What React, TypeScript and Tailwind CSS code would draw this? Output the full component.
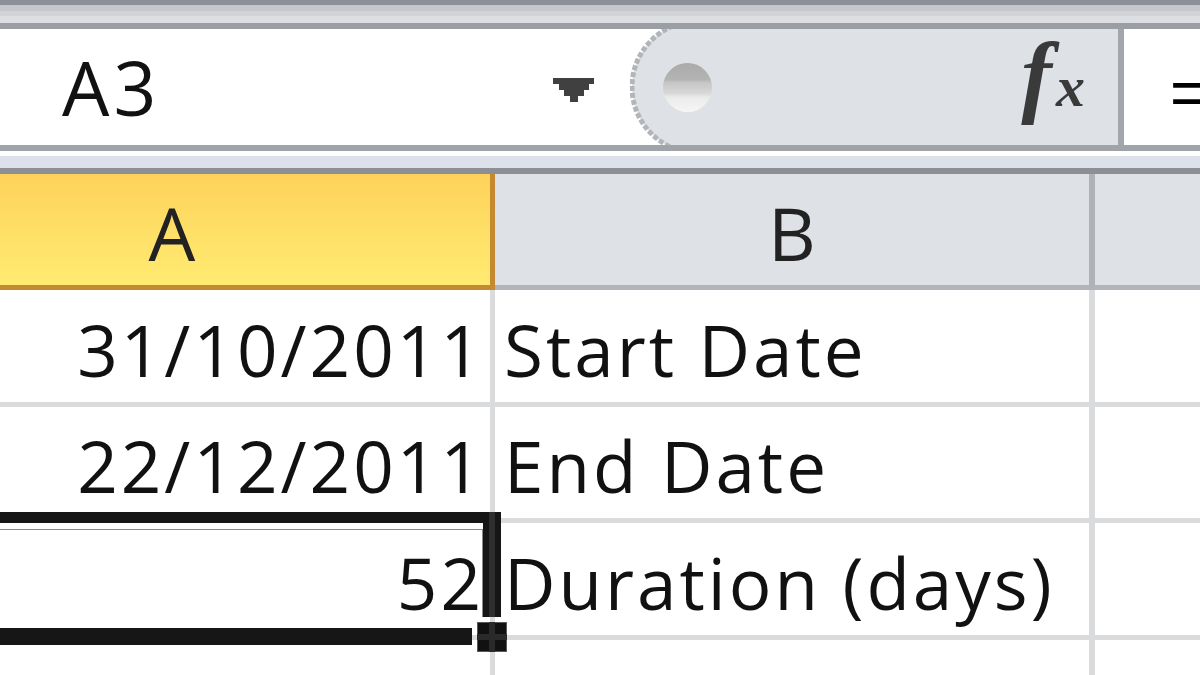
import React from 'react';

const SANS = "font-['Open_Sans','Noto_Sans',sans-serif]";

function DropArrow() {
  // stepped triangle of the name box dropdown
  return (
    <svg width="41" height="24" viewBox="0 0 41 24" className="block">
      <rect x="0" y="0" width="41" height="6" fill="#404040" />
      <rect x="6" y="6" width="30" height="6" fill="#404040" />
      <rect x="11" y="12" width="20" height="6" fill="#404040" />
      <rect x="17" y="18" width="8" height="6" fill="#404040" />
    </svg>
  );
}

function Splitter() {
  return (
    <svg width="488" height="116" viewBox="0 0 488 116" className="absolute inset-0">
      <defs>
        <linearGradient id="ball" x1="0" y1="0" x2="0" y2="1">
          <stop offset="0" stopColor="#aaaaaa" />
          <stop offset="0.34" stopColor="#b4b4b4" />
          <stop offset="0.4" stopColor="#c6c6c6" />
          <stop offset="0.62" stopColor="#d8d8d8" />
          <stop offset="0.7" stopColor="#ebebeb" />
          <stop offset="1" stopColor="#f6f6f6" />
        </linearGradient>
      </defs>
      <rect x="0" y="0" width="488" height="116" fill="#ffffff" />
      <circle cx="68" cy="58" r="66" fill="#dee1e6" stroke="#b3b5b9" strokeWidth="5" strokeDasharray="5 2" />
      <rect x="68" y="0" width="420" height="116" fill="#dee1e6" />
      <circle cx="57.5" cy="58.5" r="24.5" fill="url(#ball)" />
    </svg>
  );
}

function FormulaRow() {
  return (
    <div className="flex h-[116px]">
      <div className="flex w-[630px] shrink-0 items-end bg-white">
        <span className={`${SANS} pb-[20px] pl-[62px] text-[75px] leading-none tracking-[4px] text-[#111]`}>A3</span>
        <div className="ml-auto mr-[36px] self-center pt-[6px]">
          <DropArrow />
        </div>
      </div>
      <div className="relative flex w-[488px] shrink-0 items-end justify-end pb-[24px] pr-[33px]">
        <Splitter />
        <span className="relative flex items-baseline font-['Liberation_Serif',serif] font-bold italic leading-none text-[#3a3a3a]">
          <span className="text-[92px]">f</span>
          <span className="ml-[4px] text-[58px]">x</span>
        </span>
      </div>
      <div className="w-[6px] shrink-0 bg-[#a3a6aa]" />
      <div className="flex flex-1 items-center overflow-hidden bg-white pl-[46px] pt-[12px]">
        <span className="font-['Liberation_Sans',sans-serif] text-[64px] leading-none text-black">=</span>
      </div>
    </div>
  );
}

function HeaderRow() {
  return (
    <div className="flex h-[116px]">
      <div
        className={`${SANS} ml-[-146px] flex w-[641px] shrink-0 items-end justify-center border-b-[5px] border-r-[5px] border-[#c58a30] bg-linear-to-b from-[#fed25a] to-[#ffeb72] pb-[15px] text-[74px] leading-none text-[#222]`}
      >
        A
      </div>
      <div
        className={`${SANS} flex w-[600px] shrink-0 items-end justify-center border-b-[5px] border-r-[6px] border-b-[#b2b4b9] border-r-[#b0b2b7] bg-[#dee1e6] pb-[15px] text-[74px] leading-none text-[#222]`}
      >
        B
      </div>
      <div className="flex-1 border-b-[5px] border-[#b2b4b9] bg-[#dee1e6]" />
    </div>
  );
}

type RowProps = { a?: string; b?: string; h: string };

function Row({ a, b, h }: RowProps) {
  return (
    <div className={`flex ${h} border-b-[5px] border-[#dadbdd]`}>
      <div className={`${SANS} ml-[-146px] flex w-[641px] shrink-0 items-end justify-end border-r-[5px] border-[#dadbdd] pb-[17px] pr-[6px] text-[71px] leading-none tracking-[3px] text-[#111]`}>
        {a}
      </div>
      <div className={`${SANS} flex w-[600px] shrink-0 items-end border-r-[6px] border-[#dadbdd] pb-[17px] pl-[9px] text-[71px] leading-none tracking-[3px] whitespace-nowrap text-[#111]`}>
        {b}
      </div>
      <div className="flex-1" />
    </div>
  );
}

function Selection() {
  // active cell border of A3 with the fill handle
  return (
    <>
      <div className="absolute left-0 top-[512px] h-[11px] w-[501px] bg-[#161616]" />
      <div className="absolute left-[483px] top-[512px] h-[105px] w-[18px] bg-[#161616]" />
      <div className="absolute left-[489px] top-[512px] h-[105px] w-[6px] bg-[#2e2e2e]" />
      <div className="absolute left-0 top-[529px] h-px w-[482px] bg-[#8a8a8a]" />
      <div className="absolute left-[482px] top-[529px] h-[88px] w-px bg-[#8a8a8a]" />
      <div className="absolute left-0 top-[628px] h-[17px] w-[472px] bg-[#161616]" />
      <div className="absolute left-[477px] top-[622px] h-[30px] w-[30px] border border-[#5a5a5a] bg-[#111]" />
      <div className="absolute left-[489px] top-[622px] h-[30px] w-[6px] bg-[#2a2a2a]" />
      <div className="absolute left-[477px] top-[634px] h-[6px] w-[30px] bg-[#2a2a2a]" />
    </>
  );
}

export default function App() {
  return (
    <div className="relative h-[675px] w-[1200px] overflow-hidden bg-white">
      <div className="h-[5px] bg-[#8c9098]" />
      <div className="h-[6px] bg-[#c5c7cb]" />
      <div className="h-[5px] bg-[#d1d3d6]" />
      <div className="h-[7px] bg-[#dcdee1]" />
      <div className="h-[6px] bg-[#9b9fa5]" />
      <FormulaRow />
      <div className="h-[6px] bg-[#a0a3a8]" />
      <div className="h-[5px] bg-white" />
      <div className="h-[12px] bg-[#dde1ea]" />
      <div className="h-[6px] bg-[#8c8f94]" />
      <HeaderRow />
      <Row a="31/10/2011" b="Start Date" h="h-[117px]" />
      <Row a="22/12/2011" b="End Date" h="h-[116px]" />
      <Row a="52" b="Duration (days)" h="h-[117px]" />
      <Row h="h-[117px]" />
      <Selection />
    </div>
  );
}
